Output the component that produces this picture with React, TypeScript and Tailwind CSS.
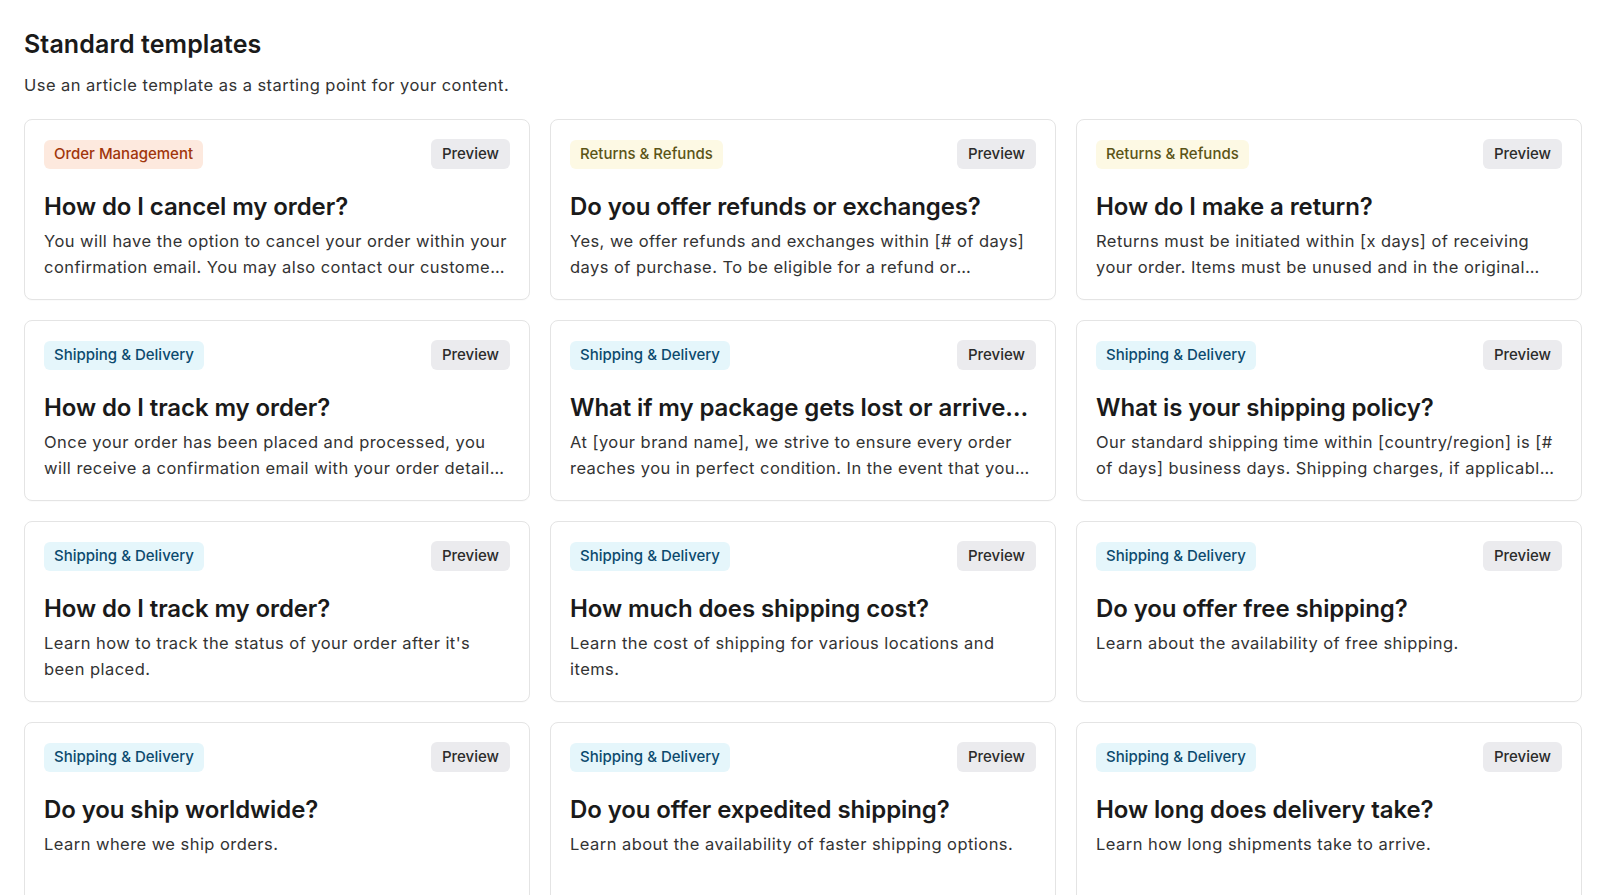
import React from 'react';

type Category = 'order' | 'returns' | 'shipping';

interface Template {
    category: Category;
    title: string;
    body: string;
}

const categoryStyles: Record<Category, { label: string; className: string }> = {
    order: { label: 'Order Management', className: 'bg-[#fde9de] text-[#a1360c]' },
    returns: { label: 'Returns & Refunds', className: 'bg-[#fdf9e4] text-[#5b5416]' },
    shipping: { label: 'Shipping & Delivery', className: 'bg-[#e5f6fb] text-[#0c4a6e]' },
};

const templates: Template[] = [
    {
        category: 'order',
        title: 'How do I cancel my order?',
        body: 'You will have the option to cancel your order within your confirmation email. You may also contact our customer service team to request a cancellation.',
    },
    {
        category: 'returns',
        title: 'Do you offer refunds or exchanges?',
        body: 'Yes, we offer refunds and exchanges within [# of days] days of purchase. To be eligible for a refund or exchange, items must be unused.',
    },
    {
        category: 'returns',
        title: 'How do I make a return?',
        body: 'Returns must be initiated within [x days] of receiving your order. Items must be unused and in the original packaging.',
    },
    {
        category: 'shipping',
        title: 'How do I track my order?',
        body: 'Once your order has been placed and processed, you will receive a confirmation email with your order details and tracking number.',
    },
    {
        category: 'shipping',
        title: 'What if my package gets lost or arrives damaged?',
        body: 'At [your brand name], we strive to ensure every order reaches you in perfect condition. In the event that you receive a damaged package.',
    },
    {
        category: 'shipping',
        title: 'What is your shipping policy?',
        body: 'Our standard shipping time within [country/region] is [# of days] business days. Shipping charges, if applicable, are calculated at checkout.',
    },
    {
        category: 'shipping',
        title: 'How do I track my order?',
        body: "Learn how to track the status of your order after it's been placed.",
    },
    {
        category: 'shipping',
        title: 'How much does shipping cost?',
        body: 'Learn the cost of shipping for various locations and items.',
    },
    {
        category: 'shipping',
        title: 'Do you offer free shipping?',
        body: 'Learn about the availability of free shipping.',
    },
    {
        category: 'shipping',
        title: 'Do you ship worldwide?',
        body: 'Learn where we ship orders.',
    },
    {
        category: 'shipping',
        title: 'Do you offer expedited shipping?',
        body: 'Learn about the availability of faster shipping options.',
    },
    {
        category: 'shipping',
        title: 'How long does delivery take?',
        body: 'Learn how long shipments take to arrive.',
    },
];

const TemplateCard: React.FC<{ template: Template }> = ({ template }) => {
    const cat = categoryStyles[template.category];
    return (
        <div className="min-h-[181px] border border-[#e4e4e4] rounded-lg bg-white px-[19px] pt-[19px] pb-[19px] shadow-[0_1px_1px_rgba(0,0,0,0.02)]">
            {/* Header */}
            <div className="flex items-center justify-between">
                <span className={`h-[29px] px-2.5 rounded-md flex items-center text-[15px] font-medium ${cat.className}`}>
                    {cat.label}
                </span>
                <button className="h-[30px] px-[11px] rounded-md bg-[#ebebee] text-[15px] font-medium text-[#2b2b2b]">
                    Preview
                </button>
            </div>

            {/* Content */}
            <h3 className="mt-[22px] text-[24px] leading-8 font-semibold text-[#1a1a1a] truncate tracking-[-0.1px]">
                {template.title}
            </h3>
            <p className="mt-[5px] text-[16.5px] leading-[26px] text-[#333333] tracking-[0.45px] line-clamp-2">
                {template.body}
            </p>
        </div>
    );
};

export default function App() {
    return (
        <div
            className="min-h-screen bg-white pl-6 pr-[18px] pt-[28px]"
            style={{ fontFamily: 'Inter, "Noto Sans", sans-serif' }}
        >
            <h2 className="text-[25px] leading-8 font-semibold text-[#1a1a1a] tracking-[0.1px]">Standard templates</h2>
            <p className="mt-[13px] text-[16.5px] leading-6 text-[#333333] tracking-[0.45px]">
                Use an article template as a starting point for your content.
            </p>

            <div className="mt-[22px] grid grid-cols-3 gap-5">
                {templates.map((t, i) => (
                    <TemplateCard key={i} template={t} />
                ))}
            </div>
        </div>
    );
}
